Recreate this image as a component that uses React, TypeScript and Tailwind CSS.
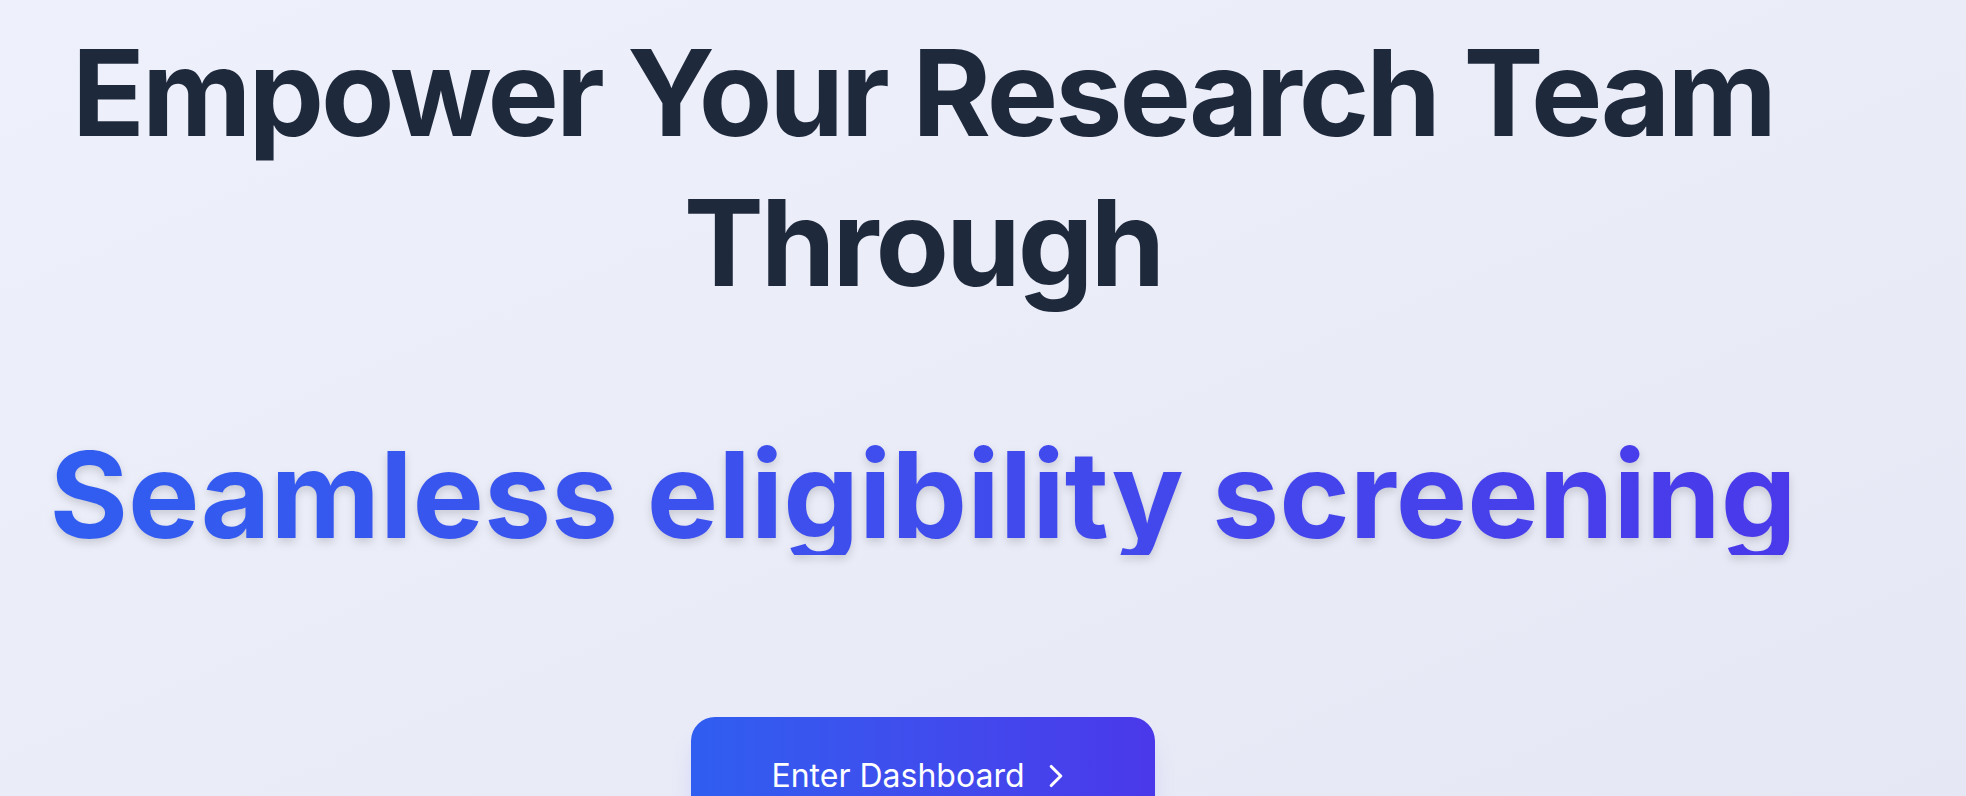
import { ChevronRight } from 'lucide-react';

export default function App() {
    return (
        <div className="min-h-screen bg-gradient-to-br from-[#eef0fb] via-[#eaecf8] to-[#e5e7f4] font-[Inter,sans-serif] overflow-hidden">
            <div className="w-[1846px] pt-[18px] text-center">
                <h1 className="text-[120px] font-bold leading-tight tracking-tight text-[#1e293b]">
                    Empower Your Research Team Through
                    <span className="block mt-[117px] leading-none tracking-normal bg-gradient-to-r from-[#2f5ef0] to-[#4a38ea] bg-clip-text text-transparent drop-shadow-lg">
                        Seamless eligibility screening
                    </span>
                </h1>

                <div className="mt-[162px] flex justify-center">
                    <button className="flex items-center gap-3 px-20 py-10 rounded-3xl bg-gradient-to-r from-[#2f5ef0] to-[#4a38ea] text-white text-[32px] leading-9 shadow-xl shadow-indigo-500/20">
                        Enter Dashboard
                        <ChevronRight size={38} strokeWidth={2} />
                    </button>
                </div>
            </div>
        </div>
    );
}
